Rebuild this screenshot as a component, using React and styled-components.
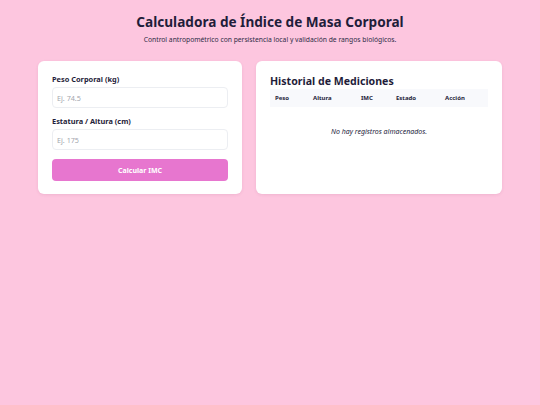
import React from 'react'
import styled, { createGlobalStyle } from 'styled-components'

const Global = createGlobalStyle`
  * { box-sizing: border-box; }
  body {
    margin: 0;
    background: #fdc6df;
    font-family: "Noto Sans", "Open Sans", sans-serif;
    color: #1f1d3a;
  }
`

const Page = styled.main`
  padding: 13px 38px;
`

const Header = styled.header`
  text-align: center;
  margin-bottom: 17px;
  h1 {
    margin: 0;
    font-size: 13.6px;
    font-weight: 700;
    line-height: 18px;
  }
  p {
    margin: 4px 0 0;
    font-size: 6.75px;
    line-height: 9px;
    color: #2e2b45;
  }
`

const Grid = styled.div`
  display: grid;
  grid-template-columns: 204px 1fr;
  gap: 14px;
`

const Card = styled.section`
  background: #fff;
  border-radius: 6px;
  box-shadow: 0 1px 3px rgba(150, 60, 110, 0.12);
  padding: ${({ $pad }) => $pad || '13px 14px'};
  min-height: 133px;
`

const Field = styled.div`
  margin-bottom: 8px;
`

const Label = styled.label`
  display: block;
  font-size: 7.4px;
  font-weight: 700;
  line-height: 10px;
  margin-bottom: 3px;
`

const Input = styled.input`
  display: block;
  width: 100%;
  height: 21px;
  border: 1px solid #eceef2;
  border-radius: 4px;
  padding: 0 4px;
  font-family: inherit;
  font-size: 7.2px;
  color: #333;
  outline: none;
  &::placeholder { color: #a3a6ae; }
`

const Button = styled.button`
  display: block;
  width: 100%;
  height: 22px;
  margin-top: 9px;
  border: none;
  border-radius: 4px;
  background: #e776cf;
  color: #fff;
  font-family: inherit;
  font-size: 7px;
  font-weight: 700;
`

const Title = styled.h2`
  margin: 0;
  font-size: 10.6px;
  font-weight: 700;
  line-height: 16px;
`

const Table = styled.table`
  width: 100%;
  border-collapse: collapse;
  th {
    background: #f8f9fc;
    text-align: left;
    font-size: 6px;
    font-weight: 700;
    height: 18px;
    padding: 0 5px;
  }
  td {
    text-align: center;
    font-size: 7px;
    font-style: italic;
    padding: 20px 0;
    color: #22213a;
  }
`

const cols = [38, 48, 35, 49, 48]

export default function App() {
  return (
    <>
      <Global />
      <Page>
        <Header>
          <h1>Calculadora de Índice de Masa Corporal</h1>
          <p>Control antropométrico con persistencia local y validación de rangos biológicos.</p>
        </Header>
        <Grid>
          <Card>
            <Field>
              <Label htmlFor="peso">Peso Corporal (kg)</Label>
              <Input id="peso" placeholder="Ej. 74.5" />
            </Field>
            <Field>
              <Label htmlFor="altura">Estatura / Altura (cm)</Label>
              <Input id="altura" placeholder="Ej. 175" />
            </Field>
            <Button>Calcular IMC</Button>
          </Card>
          <Card $pad="12px 14px">
            <Title>Historial de Mediciones</Title>
            <Table>
              <colgroup>
                {cols.map((w, i) => <col key={i} style={{ width: w }} />)}
              </colgroup>
              <thead>
                <tr>
                  <th>Peso</th>
                  <th>Altura</th>
                  <th>IMC</th>
                  <th>Estado</th>
                  <th>Acción</th>
                </tr>
              </thead>
              <tbody>
                <tr><td colSpan={5}>No hay registros almacenados.</td></tr>
              </tbody>
            </Table>
          </Card>
        </Grid>
      </Page>
    </>
  )
}
